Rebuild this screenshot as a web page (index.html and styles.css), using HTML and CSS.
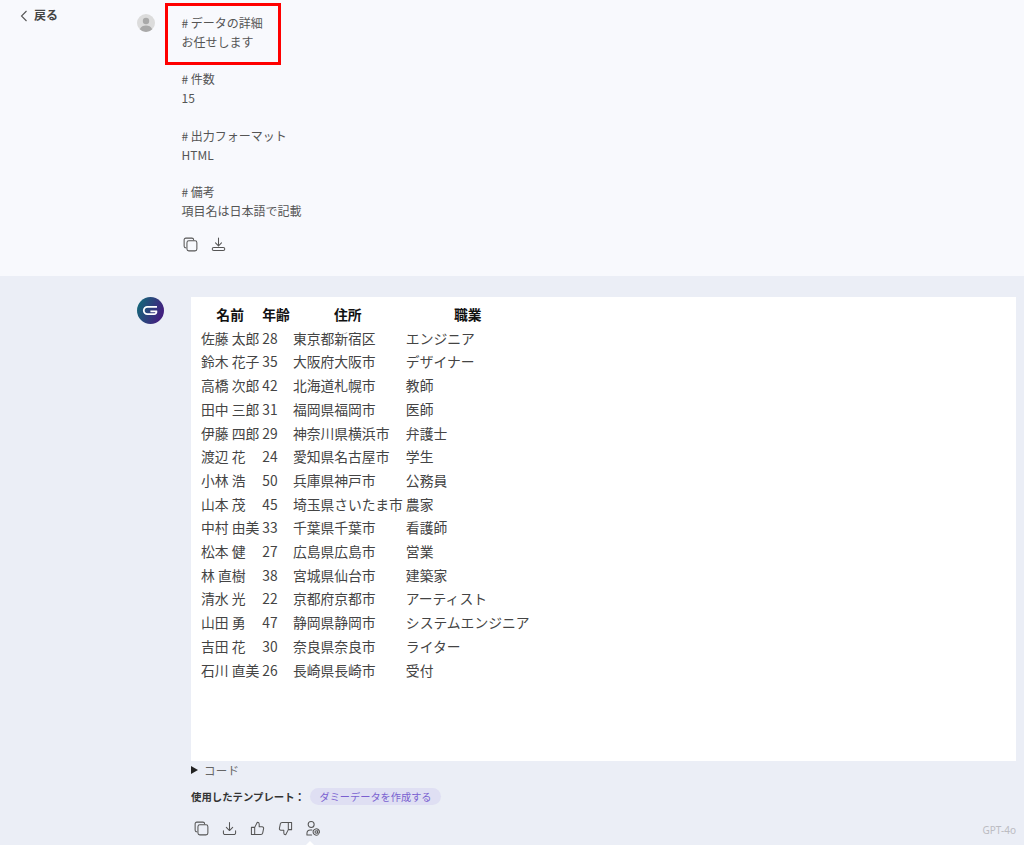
FILE: index.html
```html
<!DOCTYPE html>
<html lang="ja">
  <head>
    <meta charset="UTF-8" />
    <meta name="viewport" content="width=device-width, initial-scale=1.0" />
    <title>データの詳細</title>
    <link rel="stylesheet" href="styles.css">
  </head>
  <body>
    <section class="message message-user">
      <a class="back-link">
        <svg width="8" height="12" viewBox="0 0 8 12" fill="none" stroke="#555" stroke-width="1.1"><path d="M6.500 1 1.500 6l5 5" /></svg>
        <span>戻る</span>
      </a>
      <div class="avatar avatar-user">
        <svg width="18" height="18" viewBox="0 0 18 18"><circle cx="9" cy="9" r="9" fill="#dcdcdc" /><circle cx="9" cy="7" r="3.200" fill="#a9a9a9" /><path d="M2.800 15.200C4 12.600 6.200 11.600 9 11.600s5 1 6.200 3.600A9 9 0 0 1 9 18a9 9 0 0 1-6.200-2.800z" fill="#a9a9a9" /></svg>
      </div>
      <div class="message-body">
        <div class="highlight"></div>
        <p># データの詳細<br />お任せします</p>
        <p># 件数<br />15</p>
        <p># 出力フォーマット<br />HTML</p>
        <p># 備考<br />項目名は日本語で記載</p>
        <div class="actions actions-user">
          <svg class="icon" width="15" height="15" viewBox="0 0 16 16"><path d="M3 11.500A1.800 1.800 0 0 1 1.200 9.700V3A1.800 1.800 0 0 1 3 1.200h6.500A1.800 1.800 0 0 1 11.300 3" /><rect x="4.200" y="4" width="10.600" height="10.800" rx="2" /></svg>
          <svg class="icon" width="15" height="15" viewBox="0 0 16 16"><path d="M8 1v8.500M4.800 6.300 8 9.500l3.200-3.200" /><rect x="1.300" y="11.200" width="13.400" height="3.300" rx="1.650" /></svg>
        </div>
      </div>
    </section>

    <section class="message message-ai">
      <div class="back-spacer"></div>
      <div class="avatar">
        <svg width="27" height="27" viewBox="0 0 27 27">
          <defs>
            <linearGradient id="logoGrad" x1="0" y1="0" x2="1" y2="0.400">
              <stop offset="0" stop-color="#0f6f78" />
              <stop offset="1" stop-color="#42207f" />
            </linearGradient>
          </defs>
          <circle cx="13.500" cy="13.500" r="13.500" fill="url(#logoGrad)" />
          <path d="M20 9.800h-9.500a3.700 3.700 0 0 0 0 7.400h6.500a2.400 2.400 0 0 0 2.400-2.800h-6" fill="none" stroke="#fff" stroke-width="1.800" />
        </svg>
      </div>
      <div class="message-body">
        <div class="result-frame">
          <table class="result-table">
            <thead>
              <tr><th>名前</th><th>年齢</th><th>住所</th><th>職業</th></tr>
            </thead>
            <tbody>
              <tr><td>佐藤 太郎</td><td>28</td><td>東京都新宿区</td><td>エンジニア</td></tr>
              <tr><td>鈴木 花子</td><td>35</td><td>大阪府大阪市</td><td>デザイナー</td></tr>
              <tr><td>高橋 次郎</td><td>42</td><td>北海道札幌市</td><td>教師</td></tr>
              <tr><td>田中 三郎</td><td>31</td><td>福岡県福岡市</td><td>医師</td></tr>
              <tr><td>伊藤 四郎</td><td>29</td><td>神奈川県横浜市</td><td>弁護士</td></tr>
              <tr><td>渡辺 花</td><td>24</td><td>愛知県名古屋市</td><td>学生</td></tr>
              <tr><td>小林 浩</td><td>50</td><td>兵庫県神戸市</td><td>公務員</td></tr>
              <tr><td>山本 茂</td><td>45</td><td>埼玉県さいたま市</td><td>農家</td></tr>
              <tr><td>中村 由美</td><td>33</td><td>千葉県千葉市</td><td>看護師</td></tr>
              <tr><td>松本 健</td><td>27</td><td>広島県広島市</td><td>営業</td></tr>
              <tr><td>林 直樹</td><td>38</td><td>宮城県仙台市</td><td>建築家</td></tr>
              <tr><td>清水 光</td><td>22</td><td>京都府京都市</td><td>アーティスト</td></tr>
              <tr><td>山田 勇</td><td>47</td><td>静岡県静岡市</td><td>システムエンジニア</td></tr>
              <tr><td>吉田 花</td><td>30</td><td>奈良県奈良市</td><td>ライター</td></tr>
              <tr><td>石川 直美</td><td>26</td><td>長崎県長崎市</td><td>受付</td></tr>
            </tbody>
          </table>
        </div>
        <div class="code-toggle"><span class="caret"></span>コード</div>
        <div class="template-row">
          <span class="template-label">使用したテンプレート：</span>
          <span class="template-pill">ダミーデータを作成する</span>
        </div>
        <div class="footer-row">
          <div class="actions">
            <svg class="icon" width="15" height="15" viewBox="0 0 16 16"><path d="M3 11.500A1.800 1.800 0 0 1 1.200 9.700V3A1.800 1.800 0 0 1 3 1.200h6.500A1.800 1.800 0 0 1 11.300 3" /><rect x="4.200" y="4" width="10.600" height="10.800" rx="2" /></svg>
            <svg class="icon" width="15" height="15" viewBox="0 0 16 16"><path d="M8 1.500v8.500M4.600 6.800 8 10.200l3.400-3.400M1.500 10.500v2.200a1.800 1.800 0 0 0 1.800 1.800h9.400a1.800 1.800 0 0 0 1.800-1.800v-2.200" /></svg>
            <svg class="icon" width="15" height="15" viewBox="0 0 16 16"><path d="M5 6.800 7.800 1.300c1.300 0 2 .9 2 2v2.900h3.200c1 0 1.700.9 1.500 1.900l-1 4.800c-.2.900-.9 1.500-1.800 1.500H5zM5 6.800H1.500v7.600H5" /></svg>
            <svg class="icon" width="15" height="15" viewBox="0 0 16 16"><path d="M11 9.200 8.200 14.700c-1.300 0-2-.9-2-2V9.800H3c-1 0-1.700-.9-1.500-1.900l1-4.800c.2-.9.900-1.500 1.800-1.500H11zM11 9.200h3.500V1.600H11" /></svg>
            <svg class="icon" width="15" height="15" viewBox="0 0 16 16"><circle cx="5.500" cy="3.800" r="3.200" /><path d="M1 15v-1.800c0-2.200 1.500-3.700 3.700-3.700h1.600M1 15h5" /><circle cx="11" cy="11.700" r="1.400" /><path d="M12.400 10.300v2.100c0 1.200 2 1 2-.7a3.400 3.400 0 1 0-1.400 2.800" /></svg>
          </div>
          <span class="model-name">GPT-4o</span>
        </div>
      </div>
      <span class="tooltip-tip"></span>
    </section>
  </body>
</html>
```

FILE: styles.css
```css
* {
  box-sizing: border-box;
  margin: 0;
  padding: 0;
}

body {
  width: 1024px;
  height: 845px;
  overflow: hidden;
  font-family: "Noto Sans CJK JP", "Noto Sans", sans-serif;
  color: #555;
  background: #ebeef6;
}

.message {
  display: grid;
  grid-template-columns: 137px 44.500px 1fr;
}

.message-user {
  height: 276px;
  background: #f8f9fd;
  padding-top: 14px;
}

.message-ai {
  position: relative;
  height: 569px;
  grid-template-columns: 137px 54px 1fr;
  padding-top: 21px;
  padding-right: 8px;
}

.back-link {
  display: flex;
  align-items: flex-start;
  gap: 6px;
  margin-top: -6px;
  padding-left: 20px;
  font-size: 12px;
  font-weight: 700;
  line-height: 14px;
  color: #444;
}

.back-link svg {
  margin-top: 2px;
}

.avatar {
  line-height: 0;
}

.message-body {
  position: relative;
  min-width: 0;
}

.message-user .message-body {
  font-size: 12px;
  line-height: 18.8px;
}

.message-user p {
  margin-bottom: 18.8px;
}

.highlight {
  position: absolute;
  left: -17px;
  top: -11px;
  width: 116px;
  height: 62px;
  border: 3px solid #f00;
}

.actions {
  display: flex;
  gap: 13px;
}

.icon {
  fill: none;
  stroke: #555;
  stroke-width: 1.100;
  stroke-linejoin: round;
  stroke-linecap: round;
}

.actions-user {
  margin-top: -3px;
  padding-left: 1.500px;
}

.result-frame {
  height: 464px;
  background: #fff;
  padding: 5px 8px;
}

.result-table {
  border-spacing: 1px;
  font-size: 13.800px;
  line-height: 20.700px;
  color: #444;
}

.result-table th,
.result-table td {
  padding: 1px;
}

.result-table th {
  color: #111;
  font-weight: 700;
}

.result-table td {
  text-align: left;
}

.code-toggle {
  display: flex;
  align-items: center;
  gap: 6px;
  height: 17px;
  font-size: 11.500px;
  letter-spacing: 0.3px;
  color: #666;
}

.caret {
  width: 0;
  height: 0;
  border-left: 7px solid #222;
  border-top: 4px solid transparent;
  border-bottom: 4px solid transparent;
}

.template-row {
  display: flex;
  align-items: center;
  gap: 5.500px;
  margin-top: 10px;
}

.template-label {
  font-size: 10.400px;
  font-weight: 700;
  color: #333;
}

.template-pill {
  padding: 0 9px;
  height: 17px;
  line-height: 17px;
  border-radius: 9px;
  background: #dfdff3;
  color: #7a5fd0;
  font-size: 10.200px;
}

.footer-row {
  display: flex;
  justify-content: space-between;
  align-items: center;
  margin-top: 15px;
  padding-left: 3px;
}

.model-name {
  font-family: "Noto Sans", sans-serif;
  font-size: 10px;
  color: #bcbcc2;
  padding-top: 3px;
}

.tooltip-tip {
  position: absolute;
  left: 306px;
  bottom: 0;
  border-left: 4px solid transparent;
  border-right: 4px solid transparent;
  border-bottom: 4px solid #fff;
}
```
